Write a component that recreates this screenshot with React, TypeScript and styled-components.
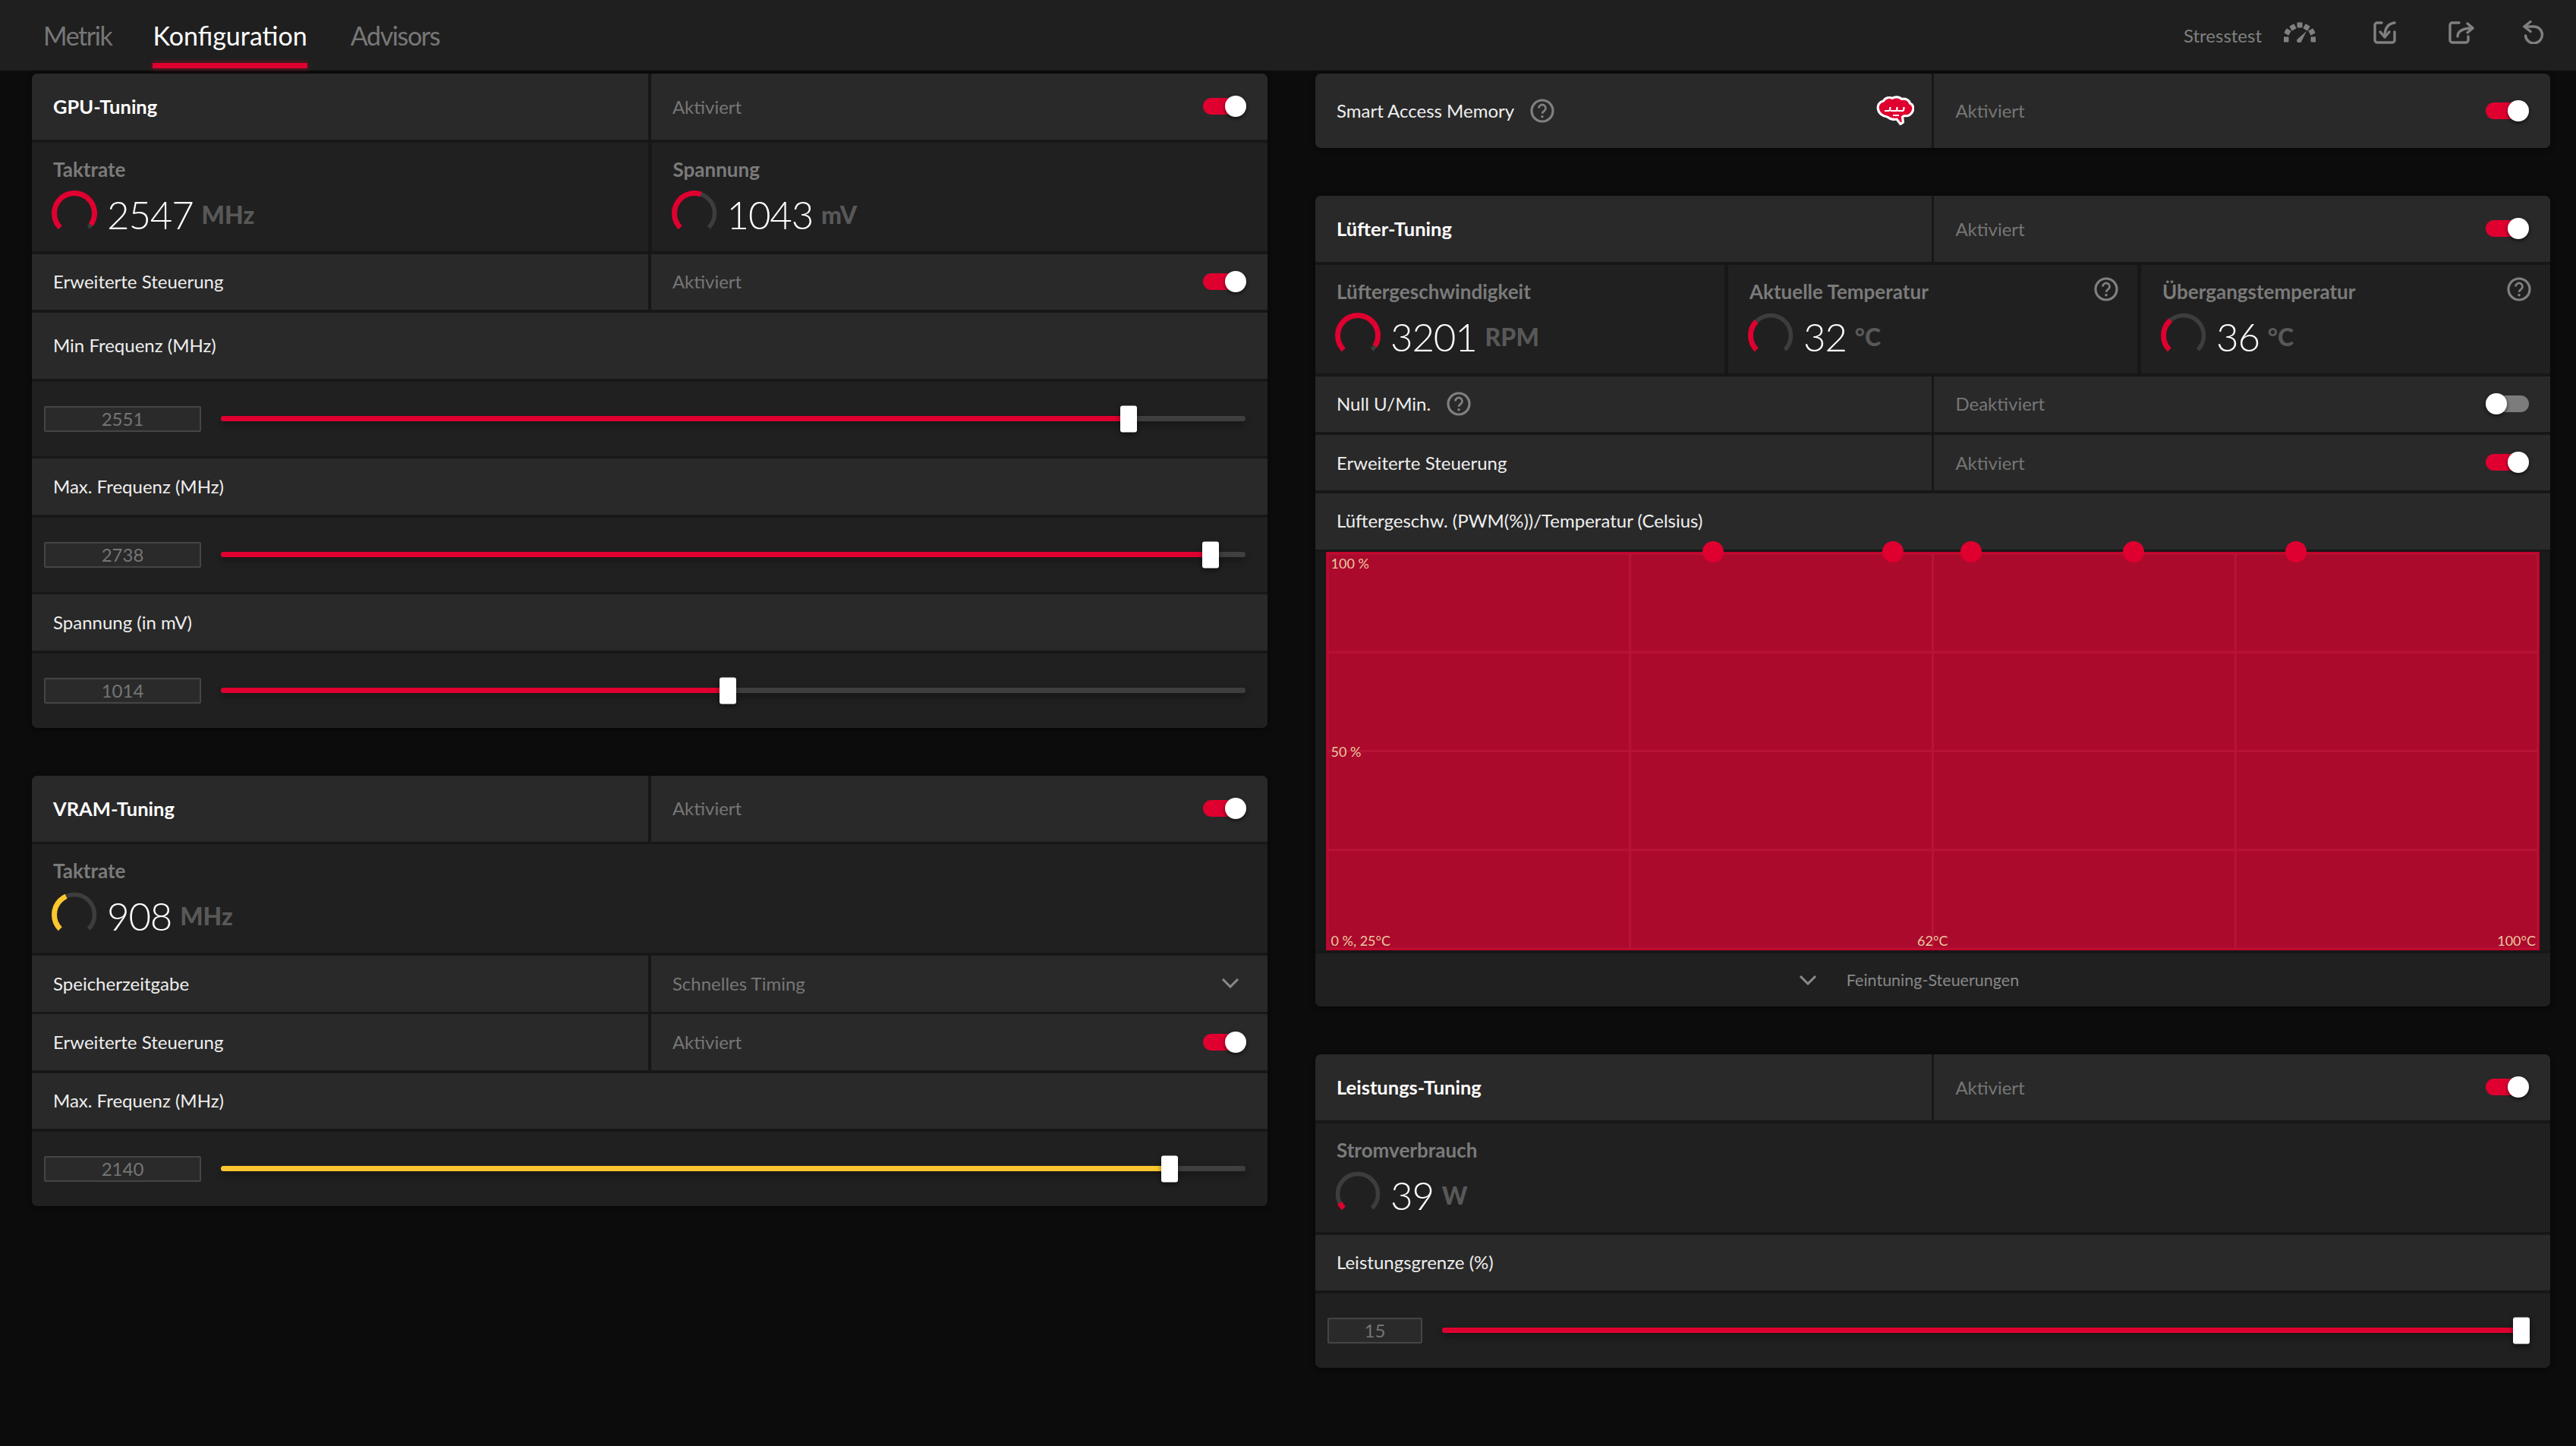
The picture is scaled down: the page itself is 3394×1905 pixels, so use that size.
import React from "react"
import styled, { createGlobalStyle } from "styled-components"

const RED = "#df0030"
const YELLOW = "#fcc72e"

const GlobalStyle = createGlobalStyle`
  html, body {
    margin: 0;
    padding: 0;
    background: #0c0c0c;
  }
  body {
    font-family: "Lato", "Open Sans", "Liberation Sans", sans-serif;
    color: #fff;
  }
  * {
    box-sizing: border-box;
  }
`

const Page = styled.div`
  width: 3394px;
  height: 1905px;
  overflow: hidden;
  background: #0c0c0c;
`

const TopBar = styled.header`
  height: 93px;
  background: #1f1f1f;
  display: flex;
  align-items: stretch;
  justify-content: space-between;
  padding: 0 42px 0 57px;
`

const Tabs = styled.nav`
  display: flex;
`

const Tab = styled.div<{ $active?: boolean; $left?: number }>`
  position: relative;
  display: flex;
  align-items: center;
  margin-left: ${(p) => p.$left ?? 0}px;
  font-size: 34px;
  letter-spacing: ${(p) => (p.$active ? "0" : "-1.4px")};
  color: ${(p) => (p.$active ? "#fff" : "#777")};

  ${(p) =>
    p.$active &&
    `
    &::after {
      content: "";
      position: absolute;
      left: 0;
      right: 0;
      bottom: 3px;
      height: 7px;
      background: ${RED};
      box-shadow: 0 0 7px rgba(223, 0, 48, 0.55);
    }
  `}
`

const Actions = styled.div`
  display: flex;
  align-items: center;
`

const StressLabel = styled.span`
  font-size: 24px;
  color: #808080;
`

const ActionIcon = styled.svg<{ $left: number }>`
  display: block;
  margin-left: ${(p) => p.$left}px;
  margin-top: -8px;
  fill: none;
  stroke: #808080;
  stroke-width: 3.4;
  stroke-linecap: round;
  stroke-linejoin: round;
`

const Main = styled.main`
  display: grid;
  grid-template-columns: 1628px 1627px;
  column-gap: 63px;
  padding: 4px 0 0 42px;
`

const Column = styled.div`
  display: flex;
  flex-direction: column;
  gap: 63px;
`

const Panel = styled.section`
  display: flex;
  flex-direction: column;
  gap: 3.75px;
  background: #171717;
  border-radius: 7px;
  overflow: hidden;
  box-shadow: 0 2px 6px rgba(0, 0, 0, 0.5);
`

const Row = styled.div<{ $height: number; $dark?: boolean }>`
  height: ${(p) => p.$height}px;
  background: ${(p) => (p.$dark ? "#202020" : "#292929")};
  display: flex;
  align-items: center;
  padding: 0 28px 2px;
  font-size: 24px;
  color: #eee;
`

const Split = styled.div<{ $height: number }>`
  height: ${(p) => p.$height}px;
  display: grid;
  grid-template-columns: 1fr 1fr;
  gap: 3.75px;
`

const Cell = styled.div`
  background: #292929;
  display: flex;
  align-items: center;
  justify-content: space-between;
  padding: 0 28px 1px;
  font-size: 24px;
  color: #eee;
`

const Title = styled.span`
  font-size: 25.5px;
  font-weight: 700;
  color: #fff;
`

const CellValue = styled.span`
  color: #767676;
`

const LabelGroup = styled.div`
  display: flex;
  align-items: center;
  gap: 21px;
`

const Toggle = styled.div<{ $on?: boolean }>`
  position: relative;
  flex: none;
  width: 57px;
  height: 22px;
  border-radius: 11px;
  background: ${(p) => (p.$on ? RED : "#7c7c7c")};

  &::after {
    content: "";
    position: absolute;
    top: -3px;
    ${(p) => (p.$on ? "right: 0;" : "left: 0;")}
    width: 28px;
    height: 28px;
    border-radius: 50%;
    background: #fff;
    box-shadow: 0 2px 5px rgba(0, 0, 0, 0.6);
  }
`

const StatRow = styled.div<{ $cols: number }>`
  height: 143px;
  display: grid;
  grid-template-columns: repeat(${(p) => p.$cols}, 1fr);
  gap: 5px;
`

const Stat = styled.div`
  background: #202020;
  padding: 21px 25px 0 28px;
`

const StatHead = styled.div`
  display: flex;
  justify-content: space-between;
  height: 28px;
`

const StatLabel = styled.span`
  font-size: 26px;
  line-height: 28px;
  font-weight: 700;
  color: #7b7b7b;
`

const StatHelp = styled.div`
  margin-top: -5px;
`

const StatBody = styled.div`
  display: flex;
  align-items: flex-end;
  margin: 14px 0 0 -2px;
`

const StatNumber = styled.span`
  margin-left: 13px;
  font-size: 51px;
  line-height: 40px;
  font-weight: 300;
  letter-spacing: -1.2px;
  color: #fff;
`

const StatUnit = styled.span`
  margin-left: 11px;
  font-size: 32px;
  line-height: 41px;
  font-weight: 900;
  color: #585858;
`

const SliderRow = styled.div<{ $right: number }>`
  height: 98px;
  background: #202020;
  display: flex;
  align-items: center;
  gap: 26px;
  padding: 0 ${(p) => p.$right}px 0 16px;
`

const ValueBox = styled.div<{ $width: number }>`
  flex: none;
  width: ${(p) => p.$width}px;
  height: 34px;
  border: 2px solid #454545;
  border-radius: 2px;
  background: #2a2a2a;
  color: #757575;
  font-size: 24px;
  line-height: 30px;
  text-align: center;
`

const Track = styled.div`
  position: relative;
  flex: 1;
  height: 7px;
  border-radius: 4px;
  background: #3f3f3f;
  box-shadow: 0 5px 8px rgba(0, 0, 0, 0.35);
`

const TrackFill = styled.div<{ $value: number; $color: string }>`
  width: ${(p) => p.$value}%;
  height: 100%;
  border-radius: 4px 0 0 4px;
  background: ${(p) => p.$color};
`

const Thumb = styled.div<{ $value: number }>`
  position: absolute;
  top: 50%;
  left: ${(p) => p.$value}%;
  width: 22px;
  height: 35px;
  transform: translate(-50%, -50%);
  border-radius: 3px;
  background: #fff;
  box-shadow: 0 3px 6px rgba(0, 0, 0, 0.5);
`

const ChartArea = styled.div`
  height: 525px;
  padding: 0 14px 0 13.5px;
  background: #1a1a1a;
`

const Chart = styled.div`
  position: relative;
  height: 100%;
  border: 2px solid #c6002d;
  background-color: #ac0a2c;
  background-image: linear-gradient(to right, #b61335 3px, transparent 3px),
    linear-gradient(to bottom, #b61335 3px, transparent 3px);
  background-size: 25% 100%, 100% 25%;
  background-position: -1.5px 0, 0 -1.5px;
`

const ChartDot = styled.div<{ $left: number }>`
  position: absolute;
  top: -2px;
  left: ${(p) => p.$left}%;
  width: 28px;
  height: 28px;
  transform: translate(-50%, -50%);
  border-radius: 50%;
  background: ${RED};
`

const ChartText = styled.span<{ $pos: string }>`
  position: absolute;
  font-size: 18px;
  line-height: 20px;
  color: #e9c8a0;
  ${(p) => p.$pos}
`

const Footer = styled.div`
  height: 70px;
  background: #202020;
  display: grid;
  grid-template-columns: 1fr auto 1fr;
  align-items: center;
  column-gap: 39px;
  font-size: 21.5px;
  color: #888;
`

const Chevron = styled.svg<{ $end?: boolean; $shift?: number }>`
  display: block;
  justify-self: ${(p) => (p.$end ? "end" : "auto")};
  margin-right: ${(p) => p.$shift ?? 0}px;
  fill: none;
  stroke: #8a8a8a;
  stroke-width: 3;
`

const BrainIcon = styled.svg`
  display: block;
  margin-right: -5px;
`

function Gauge({ value, color = RED }: { value: number; color?: string }) {
  const arc = "M11.26 48.74 A26.5 26.5 0 1 1 48.74 48.74"
  return (
    <svg width="60" height="52" viewBox="0 0 60 52" fill="none" style={{ flex: "none" }}>
      <path d={arc} stroke="#3d3d3d" strokeWidth="5.5" />
      <path
        d={arc}
        stroke={color}
        strokeWidth="7"
        pathLength={100}
        strokeDasharray={`${value} 100`}
      />
    </svg>
  )
}

function Help() {
  return (
    <svg width="32" height="32" viewBox="0 0 32 32" fill="none" stroke="#808080" strokeWidth="3.2" style={{ flex: "none", display: "block" }}>
      <circle cx="16" cy="16" r="14" />
      <path d="M11.5 12.5a4.5 4.5 0 1 1 7 3.7c-1.6 1-2.5 1.8-2.5 3.6" strokeWidth="2.8" />
      <circle cx="16" cy="23.8" r="1.8" fill="#808080" stroke="none" />
    </svg>
  )
}

function Brain() {
  return (
    <BrainIcon width="50" height="39" viewBox="0 0 50 39">
      <path
        d="M2.5 18C1 12 5 8 9.5 7C12 2.5 18 1.5 21 3.5C25 .8 31 1.5 33.5 4.5C38 3 43.5 6 44.5 10C48.5 11.5 50 16 48 20.5C46.5 25 42 27.5 37 26.5L34.5 28L35.5 35L32 37.5L27 31C22 32 17 30 14.5 28C9.5 27.5 3.5 24 2.5 18Z"
        fill={RED}
        stroke="#fff"
        strokeWidth="3.2"
        strokeLinejoin="round"
      />
      <path
        d="M11 20H15C17.5 20.5 18.5 18.5 18.5 15M18.5 20H25C27 20.5 27.5 18.5 27.5 15M27.5 20H34C36 20.5 36.5 18.5 36.5 15M22 26H30"
        fill="none"
        stroke="#fff"
        strokeWidth="2.2"
      />
    </BrainIcon>
  )
}

function StressIcon() {
  const blocks = [
    [3, 23, -90],
    [5, 13, -60],
    [12, 7, -30],
    [21, 4, 0],
    [30, 7, 30],
    [37, 13, 60],
    [39, 23, 90],
  ]
  return (
    <ActionIcon $left={29} width="42" height="27" viewBox="0 0 42 27" style={{ stroke: "none" }}>
      {blocks.map(([x, y, r]) => (
        <rect key={r} x={x - 3.5} y={y - 3.5} width="7" height="7" rx="1" fill="#808080" transform={`rotate(${r} ${x} ${y})`} />
      ))}
      <path d="M18.5 22L30 12L23.5 25A3.2 3.2 0 1 1 18.5 22Z" fill="#808080" />
    </ActionIcon>
  )
}

function SliderLine({ box, boxWidth = 207, value, color = RED, right = 29 }: { box: string; boxWidth?: number; value: number; color?: string; right?: number }) {
  return (
    <SliderRow $right={right}>
      <ValueBox $width={boxWidth}>{box}</ValueBox>
      <Track>
        <TrackFill $value={value} $color={color} />
        <Thumb $value={value} />
      </Track>
    </SliderRow>
  )
}

function ToggleLine({ label, title, height = 73.5, on = true, state = "Aktiviert", help }: { label: string; title?: boolean; height?: number; on?: boolean; state?: string; help?: boolean }) {
  return (
    <Split $height={height}>
      <Cell>
        <LabelGroup>
          {title ? <Title>{label}</Title> : <span>{label}</span>}
          {help && <Help />}
        </LabelGroup>
      </Cell>
      <Cell>
        <CellValue>{state}</CellValue>
        <Toggle $on={on} />
      </Cell>
    </Split>
  )
}

function StatCell({ label, number, unit, value, color, help }: { label: string; number: string; unit: string; value: number; color?: string; help?: boolean }) {
  return (
    <Stat>
      <StatHead>
        <StatLabel>{label}</StatLabel>
        {help && (
          <StatHelp>
            <Help />
          </StatHelp>
        )}
      </StatHead>
      <StatBody>
        <Gauge value={value} color={color} />
        <StatNumber>{number}</StatNumber>
        <StatUnit>{unit}</StatUnit>
      </StatBody>
    </Stat>
  )
}

export default function App() {
  return (
    <Page>
      <GlobalStyle />
      <TopBar>
        <Tabs>
          <Tab>Metrik</Tab>
          <Tab $active $left={54}>Konfiguration</Tab>
          <Tab $left={57}>Advisors</Tab>
        </Tabs>
        <Actions>
          <StressLabel>Stresstest</StressLabel>
          <StressIcon />
          <ActionIcon $left={76} width="30" height="30" viewBox="0 0 30 30">
            <path d="M11 2H5a3 3 0 0 0-3 3V25a3 3 0 0 0 3 3H25a3 3 0 0 0 3-3V14" />
            <path d="M28 2C20 3 15 9 15 20" />
            <path d="M9 14L15 21L21 14" />
          </ActionIcon>
          <ActionIcon $left={69} width="34" height="30" viewBox="0 0 34 30">
            <path d="M14 2H5a3 3 0 0 0-3 3V25a3 3 0 0 0 3 3H23a3 3 0 0 0 3-3V20" />
            <path d="M12 20C12 14 18 9 31 9" />
            <path d="M25 3L32 9L25 15" />
          </ActionIcon>
          <ActionIcon $left={64} width="28" height="31" viewBox="0 0 28 31">
            <path d="M2 8H14A11 11 0 1 1 3.5 20" />
            <path d="M10 1.5L2 8L10 14.5" />
          </ActionIcon>
        </Actions>
      </TopBar>
      <Main>
        <Column>
          <Panel>
            <ToggleLine label="GPU-Tuning" title height={87} />
            <StatRow $cols={2}>
              <StatCell label="Taktrate" number="2547" unit="MHz" value={96} />
              <StatCell label="Spannung" number="1043" unit="mV" value={57} />
            </StatRow>
            <ToggleLine label="Erweiterte Steuerung" />
            <Row $height={87}>Min Frequenz (MHz)</Row>
            <SliderLine box="2551" value={88.6} />
            <Row $height={73.5}>Max. Frequenz (MHz)</Row>
            <SliderLine box="2738" value={96.6} />
            <Row $height={73.5}>Spannung (in mV)</Row>
            <SliderLine box="1014" value={49.5} />
          </Panel>
          <Panel>
            <ToggleLine label="VRAM-Tuning" title height={87} />
            <StatRow $cols={1}>
              <StatCell label="Taktrate" number="908" unit="MHz" value={41} color={YELLOW} />
            </StatRow>
            <Split $height={73.5}>
              <Cell>Speicherzeitgabe</Cell>
              <Cell>
                <CellValue>Schnelles Timing</CellValue>
                <Chevron $shift={9} width="24" height="14" viewBox="0 0 24 14">
                  <path d="M2 2L12 12L22 2" />
                </Chevron>
              </Cell>
            </Split>
            <ToggleLine label="Erweiterte Steuerung" />
            <Row $height={73.5}>Max. Frequenz (MHz)</Row>
            <SliderLine box="2140" value={92.6} color={YELLOW} />
          </Panel>
        </Column>
        <Column>
          <Panel>
            <Split $height={98}>
              <Cell>
                <LabelGroup>
                  <span>Smart Access Memory</span>
                  <Help />
                </LabelGroup>
                <Brain />
              </Cell>
              <Cell>
                <CellValue>Aktiviert</CellValue>
                <Toggle $on />
              </Cell>
            </Split>
          </Panel>
          <Panel>
            <ToggleLine label="Lüfter-Tuning" title height={87} />
            <StatRow $cols={3}>
              <StatCell label="Lüftergeschwindigkeit" number="3201" unit="RPM" value={95} />
              <StatCell label="Aktuelle Temperatur" number="32" unit="°C" value={33} help />
              <StatCell label="Übergangstemperatur" number="36" unit="°C" value={35} help />
            </StatRow>
            <ToggleLine label="Null U/Min." on={false} state="Deaktiviert" help />
            <ToggleLine label="Erweiterte Steuerung" />
            <Row $height={73.5}>Lüftergeschw. (PWM(%))/Temperatur (Celsius)</Row>
            <ChartArea>
              <Chart>
                <ChartText $pos="top: 3px; left: 5px;">100 %</ChartText>
                <ChartText $pos="top: 251px; left: 5px;">50 %</ChartText>
                <ChartText $pos="bottom: 1px; left: 5px;">0 %, 25°C</ChartText>
                <ChartText $pos="bottom: 1px; left: 50%; transform: translateX(-50%);">62°C</ChartText>
                <ChartText $pos="bottom: 1px; right: 3px;">100°C</ChartText>
                {[31.9, 46.7, 53.2, 66.6, 80].map((left) => (
                  <ChartDot key={left} $left={left} />
                ))}
              </Chart>
            </ChartArea>
            <Footer>
              <Chevron $end width="24" height="14" viewBox="0 0 24 14">
                <path d="M2 2L12 12L22 2" />
              </Chevron>
              <span>Feintuning-Steuerungen</span>
            </Footer>
          </Panel>
          <Panel>
            <ToggleLine label="Leistungs-Tuning" title height={87} />
            <StatRow $cols={1}>
              <StatCell label="Stromverbrauch" number="39" unit="W" value={7} />
            </StatRow>
            <Row $height={73.5}>Leistungsgrenze (%)</Row>
            <SliderLine box="15" boxWidth={125} value={99.2} right={27} />
          </Panel>
        </Column>
      </Main>
    </Page>
  )
}
